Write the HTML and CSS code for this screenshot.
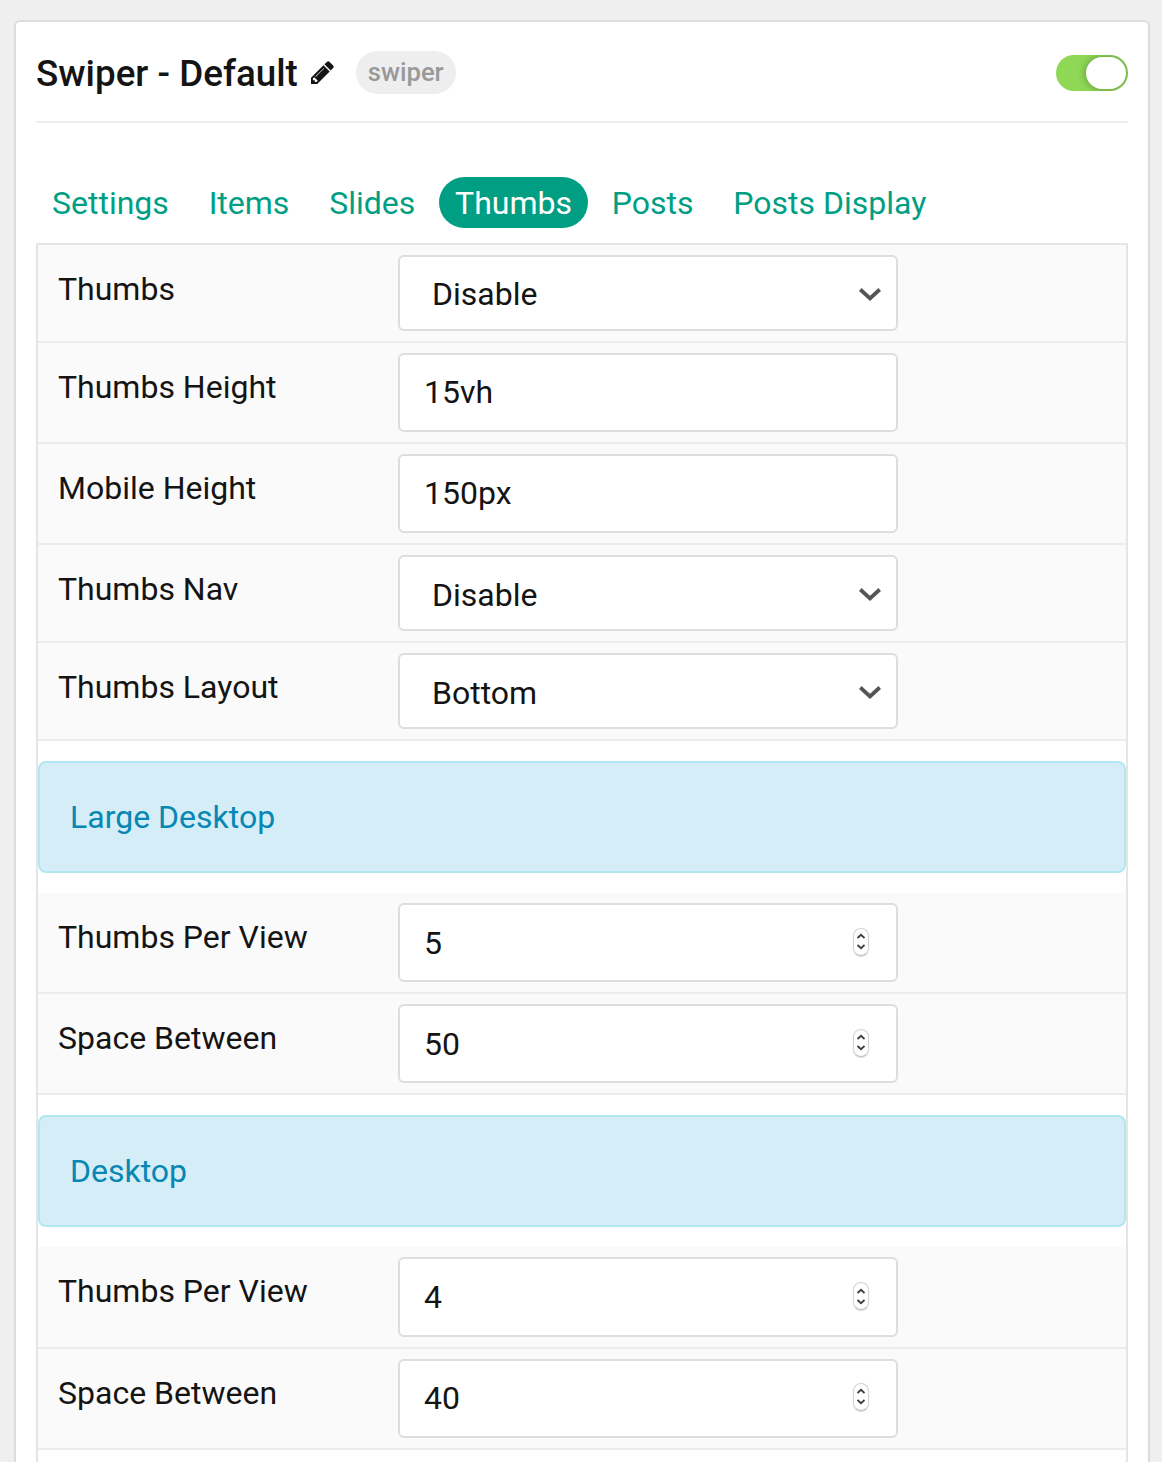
FILE: index.html
```html
<!DOCTYPE html>
<html lang="en">
<head>
<meta charset="utf-8">
<title>Swiper - Default</title>
<link rel="stylesheet" href="styles.css">
</head>
<body>
<svg class="sprite" width="0" height="0" aria-hidden="true">
  <symbol id="chevron" viewBox="0 0 22 13"><path d="M1.300 1.500 11 10.400l9.700-8.900" fill="none" stroke="#555" stroke-width="3.800"/></symbol>
  <symbol id="steps" viewBox="0 0 8 17"><path d="M.5 5 4 1.800l3.500 3.200M.5 12 4 15.200l3.500-3.200" fill="none" stroke="#3c3c3c" stroke-width="1.800"/></symbol>
</svg>
<main class="card">
  <header class="card-head">
    <h1 class="title">Swiper - Default</h1>
    <svg class="pencil" viewBox="0 0 1536 1536"><path fill="#141414" d="M363 1408l91-91-235-235-91 91v107h128v128h107zM880 486q0-16-16-16-10 0-17 7l-542 542q-7 7-7 17 0 16 16 16 10 0 17-7l542-542q7-7 7-17zM832 288l416 416-832 832H0v-416zM1515 384q0 53-37 90l-166 166-416-416 166-165q36-38 90-38 53 0 91 38l235 234q37 39 37 91z"/></svg>
    <span class="badge">swiper</span>
    <span class="switch"><span class="knob"></span></span>
  </header>
  <nav class="tabs">
    <a class="tab">Settings</a>
    <a class="tab">Items</a>
    <a class="tab">Slides</a>
    <a class="tab active">Thumbs</a>
    <a class="tab">Posts</a>
    <a class="tab">Posts Display</a>
  </nav>
  <section class="panel">
    <div class="row"><label class="label">Thumbs</label><div class="field select"><span>Disable</span><svg class="chevron"><use href="#chevron"/></svg></div></div>
    <div class="row"><label class="label">Thumbs Height</label><div class="field">15vh</div></div>
    <div class="row"><label class="label">Mobile Height</label><div class="field">150px</div></div>
    <div class="row"><label class="label">Thumbs Nav</label><div class="field select"><span class="low">Disable</span><svg class="chevron"><use href="#chevron"/></svg></div></div>
    <div class="row"><label class="label">Thumbs Layout</label><div class="field select"><span class="low">Bottom</span><svg class="chevron"><use href="#chevron"/></svg></div></div>
    <div class="group">Large Desktop</div>
    <div class="row"><label class="label">Thumbs Per View</label><div class="field number"><span class="low">5</span><span class="stepper"><svg class="steps"><use href="#steps"/></svg></span></div></div>
    <div class="row"><label class="label">Space Between</label><div class="field number"><span class="low">50</span><span class="stepper"><svg class="steps"><use href="#steps"/></svg></span></div></div>
    <div class="group">Desktop</div>
    <div class="row"><label class="label">Thumbs Per View</label><div class="field number tall"><span>4</span><span class="stepper"><svg class="steps"><use href="#steps"/></svg></span></div></div>
    <div class="row"><label class="label">Space Between</label><div class="field number"><span>40</span><span class="stepper"><svg class="steps"><use href="#steps"/></svg></span></div></div>
  </section>
</main>
</body>
</html>
```
FILE: styles.css
```css
* { box-sizing: border-box; }
html { height: 100%; overflow: hidden; }
body {
  margin: 0;
  height: 1462px;
  overflow: hidden;
  padding: 20px 12px 0 14px;
  background: #efefef;
  color: #141414;
  font: 400 32px/50px Roboto, sans-serif;
}
.sprite { display: block; }
.card {
  height: 1442px;
  padding: 0 20px;
  background: #fff;
  border: 2px solid #ddd;
  border-bottom: 0;
  border-radius: 6px 6px 0 0;
}
.card-head {
  display: flex;
  align-items: center;
  height: 101px;
  padding-top: 2px;
  border-bottom: 2px solid #eee;
}
.title { margin: 2px 0 0; font-size: 36.8px; font-weight: 500; }
.pencil { width: 23px; height: 23px; margin-left: 13px; }
.badge {
  height: 43px;
  margin-left: 22px;
  padding: 0 12px;
  border-radius: 22px;
  background: #eee;
  color: #999;
  font-size: 25.6px;
  font-weight: 500;
  line-height: 43px;
}
.switch {
  display: flex;
  justify-content: flex-end;
  width: 72px;
  height: 36px;
  margin-left: auto;
  padding: 2px;
  border-radius: 18px;
  background: #8fd856;
  overflow: hidden;
}
.knob {
  width: 40px;
  height: 32px;
  border-radius: 16px;
  background: #fff;
  box-shadow: 0 0 8px rgba(0, 0, 0, 0.35);
}
.tabs { display: flex; gap: 7.8px; padding: 54px 0 15px; }
.tab {
  height: 51px;
  padding: 0 16px;
  border-radius: 26px;
  color: #009f84;
  line-height: 52px;
}
.tab.active { background: #009f84; color: #fff; }
.panel { height: 1219px; border: 2px solid #e5e5e5; border-bottom: 0; }
.row {
  display: flex;
  align-items: flex-start;
  padding: 10px 20px;
  background: #fafafa;
  border-bottom: 2px solid #ececec;
}
.label { width: 340px; padding-top: 9px; }
.field {
  width: 500px;
  height: 79px;
  padding: 0 24px;
  background: #fff;
  border: 2px solid #ddd;
  border-radius: 6px;
  line-height: 75px;
}
.select, .number { display: flex; align-items: center; justify-content: space-between; }
.select { height: 76px; padding: 2px 15px 0 32px; }
.number { padding-right: 27px; }
.number.tall { height: 80px; }
.low { margin-top: 2px; }
.chevron { width: 22px; height: 13px; }
.stepper {
  display: flex;
  align-items: center;
  justify-content: center;
  width: 16px;
  height: 28px;
  margin-bottom: 2px;
  border: 1px solid #d2d2d2;
  border-bottom-color: #bbb;
  border-radius: 8px;
  box-shadow: 0 1px 1px rgba(0, 0, 0, 0.15);
}
.row:last-child .stepper { margin-bottom: 4px; }
.steps { width: 8px; height: 17px; }
.group {
  height: 112px;
  margin: 20px 0;
  padding: 0 30px;
  background: #d4edf7;
  border: 2px solid #b0e8f1;
  border-radius: 8px;
  color: #0687b4;
  line-height: 108px;
}
```
